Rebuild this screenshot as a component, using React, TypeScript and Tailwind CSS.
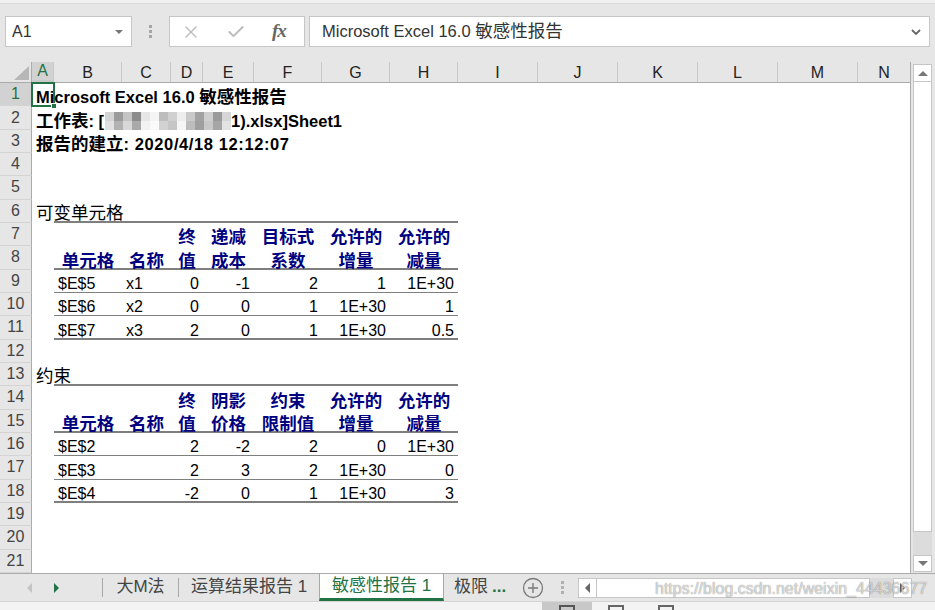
import React from 'react';
import { X, Check } from 'lucide-react';

type Cell = { t?: React.ReactNode; a?: 'l' | 'r' | 'c'; h?: boolean };

const COLS = [
  { k: 'A', w: 'w-[22px]' },
  { k: 'B', w: 'w-[68px]' },
  { k: 'C', w: 'w-[49px]' },
  { k: 'D', w: 'w-[32px]' },
  { k: 'E', w: 'w-[51px]' },
  { k: 'F', w: 'w-[68px]' },
  { k: 'G', w: 'w-[68px]' },
  { k: 'H', w: 'w-[68px]' },
  { k: 'I', w: 'w-[80px]' },
  { k: 'J', w: 'w-[80px]' },
  { k: 'K', w: 'w-[80px]' },
  { k: 'L', w: 'w-[80px]' },
  { k: 'M', w: 'w-[80px]' },
  { k: 'N', w: 'w-[52px]' },
];

// pixelated (blurred-out) part of the file name
const MOSAIC = [
  '#d4d4d4', '#9b9b9b', '#c4c4c4', '#8c8c8c', '#e6e6e6', '#f4f4f4', '#bdbdbd', '#d0d0d0',
  '#ededed', '#c9c9c9', '#a2a2a2', '#cfcfcf', '#9a9a9a', '#d6d6d6',
  '#e1e1e1', '#b2b2b2', '#d8d8d8', '#a9a9a9', '#f2f2f2', '#fafafa', '#d2d2d2', '#c6c6c6',
  '#f6f6f6', '#bcbcbc', '#9f9f9f', '#c8c8c8', '#a6a6a6', '#e3e3e3',
];

function Mosaic() {
  return (
    <span className="grid grid-cols-[repeat(14,9px)] grid-rows-[9px_9px] self-end mb-[1px] ml-[1px]">
      {MOSAIC.map((c, i) => (
        <span key={i} className="block" style={{ backgroundColor: c }} />
      ))}
    </span>
  );
}

// title lines: a flex run so mixed fonts don't stretch the line box
function Title({ children }: { children: React.ReactNode }) {
  return <span className="flex items-baseline h-[20px] leading-[20px] font-bold text-[16.5px]">{children}</span>;
}

const cjk = (s: string) => <span className="text-[17.5px]">{s}</span>;

const hdr = (s: string): Cell => ({ t: s, a: 'c', h: true });

const ROWS: Record<number, Cell[]> = {
  1: [{ t: <Title>Microsoft Excel 16.0&nbsp;{cjk('敏感性报告')}</Title> }],
  2: [{ t: <Title>{cjk('工作表')}<span>:&nbsp;[</span><Mosaic /><span>1).xlsx]Sheet1</span></Title> }],
  3: [{ t: <Title>{cjk('报告的建立')}<span className="tracking-[0.6px]">:&nbsp;2020/4/18 12:12:07</span></Title> }],
  6: [{ t: cjk('可变单元格') }],
  7: [{}, {}, {}, hdr('终'), hdr('递减'), hdr('目标式'), hdr('允许的'), hdr('允许的')],
  8: [{}, hdr('单元格'), hdr('名称'), hdr('值'), hdr('成本'), hdr('系数'), hdr('增量'), hdr('减量')],
  9: [{}, { t: '$E$5' }, { t: 'x1' }, { t: '0', a: 'r' }, { t: '-1', a: 'r' }, { t: '2', a: 'r' }, { t: '1', a: 'r' }, { t: '1E+30', a: 'r' }],
  10: [{}, { t: '$E$6' }, { t: 'x2' }, { t: '0', a: 'r' }, { t: '0', a: 'r' }, { t: '1', a: 'r' }, { t: '1E+30', a: 'r' }, { t: '1', a: 'r' }],
  11: [{}, { t: '$E$7' }, { t: 'x3' }, { t: '2', a: 'r' }, { t: '0', a: 'r' }, { t: '1', a: 'r' }, { t: '1E+30', a: 'r' }, { t: '0.5', a: 'r' }],
  13: [{ t: cjk('约束') }],
  14: [{}, {}, {}, hdr('终'), hdr('阴影'), hdr('约束'), hdr('允许的'), hdr('允许的')],
  15: [{}, hdr('单元格'), hdr('名称'), hdr('值'), hdr('价格'), hdr('限制值'), hdr('增量'), hdr('减量')],
  16: [{}, { t: '$E$2' }, {}, { t: '2', a: 'r' }, { t: '-2', a: 'r' }, { t: '2', a: 'r' }, { t: '0', a: 'r' }, { t: '1E+30', a: 'r' }],
  17: [{}, { t: '$E$3' }, {}, { t: '2', a: 'r' }, { t: '3', a: 'r' }, { t: '2', a: 'r' }, { t: '1E+30', a: 'r' }, { t: '0', a: 'r' }],
  18: [{}, { t: '$E$4' }, {}, { t: '-2', a: 'r' }, { t: '0', a: 'r' }, { t: '1', a: 'r' }, { t: '1E+30', a: 'r' }, { t: '3', a: 'r' }],
};

const LINES: Record<number, 'thick' | 'thin'> = {
  6: 'thick', 8: 'thick', 9: 'thin', 10: 'thin', 11: 'thick',
  13: 'thick', 15: 'thick', 16: 'thin', 17: 'thin', 18: 'thick',
};

function SheetRow({ n }: { n: number }) {
  const cells = ROWS[n] || [];
  const line = LINES[n];
  return (
    <div className="flex h-[23.333px]">
      <div
        className={`w-[32px] shrink-0 flex items-center justify-center border-r border-b border-r-[#ababab] border-b-[#d4d4d4] text-[16px] ${
          n === 1 ? 'bg-[#d2d2d2] text-[#217346]' : 'bg-[#e6e6e6] text-[#444]'
        }`}
      >
        {n}
      </div>
      {COLS.map((c, i) => {
        const cell = cells[i] || {};
        const inTable = i >= 1 && i <= 7;
        const shadow =
          inTable && line === 'thick'
            ? 'shadow-[inset_0_-2px_0_#7f7f7f]'
            : inTable && line === 'thin'
            ? 'shadow-[inset_0_-1px_0_#7f7f7f]'
            : '';
        const align =
          cell.a === 'r' ? 'justify-end pr-[4px]' : cell.a === 'c' ? 'justify-center' : 'justify-start pl-[4px]';
        return (
          <div key={c.k} className={`relative shrink-0 flex items-end ${c.w} ${align} ${shadow}`}>
            {cell.t !== undefined && (
              <span
                className={`whitespace-nowrap leading-[20px] -mb-[1px] ${
                  cell.h ? 'font-bold text-[17.5px] text-[#000080]' : 'text-[16px] text-black'
                }`}
              >
                {cell.t}
              </span>
            )}
            {n === 1 && i === 0 && (
              <>
                <div className="absolute -left-[1px] -top-[1px] w-[24px] h-[25px] border-2 border-[#217346]" />
                <div className="absolute -right-[3px] -bottom-[3px] w-[6px] h-[6px] bg-[#217346] border border-white" />
              </>
            )}
          </div>
        );
      })}
    </div>
  );
}

function Toolbar() {
  return (
    <div className="h-[62px] shrink-0 flex flex-col">
      <div className="h-[4px] bg-[#f1f1f1] border-b border-[#dadada]" />
      <div className="flex items-center mt-[12px] h-[31px]">
        <div className="ml-[5px] w-[127px] h-[31px] bg-white border border-[#c6c6c6] flex items-center pl-[6px] pr-[8px] justify-between">
          <span className="text-[16px] text-[#333]">A1</span>
          <span className="w-0 h-0 border-l-[4px] border-r-[4px] border-t-[4px] border-l-transparent border-r-transparent border-t-[#777]" />
        </div>
        <div className="ml-[17px] flex flex-col gap-[2px]">
          <span className="w-[3px] h-[3px] bg-[#a6a6a6]" />
          <span className="w-[3px] h-[3px] bg-[#a6a6a6]" />
          <span className="w-[3px] h-[3px] bg-[#a6a6a6]" />
        </div>
        <div className="ml-[17px] w-[136px] h-[31px] bg-white border border-[#c6c6c6] flex items-center pl-[11px]">
          <X size={20} strokeWidth={1.6} className="text-[#bcbcbc]" />
          <Check size={20} strokeWidth={2.4} className="text-[#bcbcbc] ml-[25px]" />
          <span className="ml-[26px] font-['Liberation_Serif',serif] italic font-bold text-[19px] text-[#666] tracking-[-1px]">
            fx
          </span>
        </div>
        <div className="ml-[4px] w-[621px] h-[31px] bg-white border border-[#c6c6c6] flex items-center pl-[12px] pr-[8px] justify-between">
          <span className="text-[16.5px] text-[#333] whitespace-nowrap">
            Microsoft Excel 16.0 <span className="text-[17.5px]">敏感性报告</span>
          </span>
          <svg width="10" height="8" viewBox="0 0 10 8">
            <path d="M1 2 L5 6 L9 2" stroke="#666" strokeWidth="1.8" fill="none" />
          </svg>
        </div>
      </div>
    </div>
  );
}

function ColumnHeader() {
  return (
    <div className="flex h-[21px] shrink-0 border-b border-[#ababab]">
      <div className="w-[32px] shrink-0 border-r border-[#ababab] relative bg-[#e6e6e6]">
        <div className="absolute left-[14px] top-[4px] w-0 h-0 border-l-[15px] border-b-[14px] border-l-transparent border-b-[#b7b7b7]" />
      </div>
      {COLS.map((c, i) => (
        <div
          key={c.k}
          className={`${c.w} shrink-0 flex items-end justify-center text-[16px] leading-[19px] ${
            i === 0 ? 'bg-[#d2d2d2] text-[#217346] border-b-2 border-[#217346]' : 'text-[#222]'
          } ${i < COLS.length - 1 ? 'border-r border-[#c9c9c9]' : ''}`}
        >
          {c.k}
        </div>
      ))}
    </div>
  );
}

function VScroll() {
  return (
    <div className="w-[24px] shrink-0 flex flex-col pl-[2px] pr-[3px] pb-[1px]">
      <div className="mt-[2px] h-[18px] bg-white border border-[#c6c6c6] flex items-center justify-center">
        <span className="w-0 h-0 border-l-[5px] border-r-[5px] border-b-[5px] border-l-transparent border-r-transparent border-b-[#777]" />
      </div>
      <div className="h-[450px] bg-white border-x border-b border-[#c6c6c6]" />
      <div className="flex-1 bg-[#dcdcdc]" />
      <div className="h-[17px] bg-white border border-[#c6c6c6] flex items-center justify-center">
        <span className="w-0 h-0 border-l-[5px] border-r-[5px] border-t-[5px] border-l-transparent border-r-transparent border-t-[#777]" />
      </div>
    </div>
  );
}

function TabBar() {
  return (
    <div className="h-[28px] shrink-0 flex items-stretch border-t border-[#ababab] relative">
      <div className="w-[102px] shrink-0 flex items-center pl-[27px] gap-[22px]">
        <span className="w-0 h-0 border-t-[5px] border-b-[5px] border-r-[5px] border-t-transparent border-b-transparent border-r-[#c4c4c4]" />
        <span className="w-0 h-0 border-t-[5px] border-b-[5px] border-l-[5px] border-t-transparent border-b-transparent border-l-[#217346]" />
      </div>
      <div className="w-[1px] my-[4px] bg-[#a8a8a8]" />
      <div className="w-[75px] flex items-center justify-center text-[#444] text-[17px] pb-[2px]">大M法</div>
      <div className="w-[1px] my-[4px] bg-[#a8a8a8]" />
      <div className="w-[140px] flex items-center justify-center text-[#444] text-[17px] pb-[2px]">运算结果报告 1</div>
      <div className="w-[125px] bg-white border-l border-r border-[#a8a8a8] border-b-[3px] border-b-[#217346] flex items-center justify-center text-[#217346] text-[17px]">
        敏感性报告 1
      </div>
      <div className="w-[70px] flex items-center pl-[10px] text-[#444] text-[17px] pb-[2px] whitespace-nowrap">
        极限 <span className="ml-[4px] text-[#217346] font-bold">...</span>
      </div>
      <div className="flex items-center ml-[8px]">
        <svg width="22" height="22" viewBox="0 0 22 22">
          <circle cx="11" cy="11" r="9.5" stroke="#7a7a7a" strokeWidth="1.3" fill="none" />
          <path d="M11 6 V16 M6 11 H16" stroke="#7a7a7a" strokeWidth="1.4" />
        </svg>
      </div>
      <div className="ml-[17px] flex flex-col justify-center gap-[2px]">
        <span className="w-[3px] h-[3px] bg-[#b0b0b0]" />
        <span className="w-[3px] h-[3px] bg-[#b0b0b0]" />
        <span className="w-[3px] h-[3px] bg-[#b0b0b0]" />
      </div>
      <div className="ml-[14px] w-[334px] flex items-center mt-[1px] h-[20px] self-center">
        <div className="w-[19px] h-[20px] bg-white border border-[#c6c6c6] flex items-center justify-center">
          <span className="w-0 h-0 border-t-[5px] border-b-[5px] border-r-[5px] border-t-transparent border-b-transparent border-r-[#666]" />
        </div>
        <div className="w-[273px] h-[20px] bg-white border-y border-r border-[#c6c6c6]" />
        <div className="flex-1 h-[20px] bg-[#dcdcdc]" />
        <div className="w-[19px] h-[20px] bg-white border border-[#c6c6c6] flex items-center justify-center">
          <span className="w-0 h-0 border-t-[5px] border-b-[5px] border-l-[5px] border-t-transparent border-b-transparent border-l-[#666]" />
        </div>
      </div>
      {/* watermark over the scrollbar */}
      <div className="absolute left-[655px] top-[3px] text-[16px] text-white/70 [text-shadow:0_0_1px_rgba(0,0,0,0.6)] whitespace-nowrap pointer-events-none">
        https://blog.csdn.net/weixin_44436677
      </div>
    </div>
  );
}

function StatusBar() {
  return (
    <div className="flex-1 bg-[#f3f3f3] border-t border-[#d4d4d4] flex items-start">
      <div className="ml-[542px] w-[50px] h-full bg-[#c8c8c8] flex justify-center pt-[3px]">
        <span className="w-[16px] h-[8px] border-2 border-b-0 border-[#555]" />
      </div>
      <div className="ml-[16px] pt-[3px]">
        <span className="block w-[16px] h-[8px] border-2 border-b-0 border-[#666]" />
      </div>
      <div className="ml-[34px] pt-[3px]">
        <span className="block w-[16px] h-[8px] border-2 border-b-0 border-[#666]" />
      </div>
    </div>
  );
}

export default function App() {
  const rows = Array.from({ length: 21 }, (_, i) => i + 1);
  return (
    <div className="w-[935px] h-[610px] overflow-hidden bg-[#e6e6e6] flex flex-col font-['Liberation_Sans','Noto_Sans_CJK_SC',sans-serif]">
      <Toolbar />
      <div className="flex h-[511px] shrink-0">
        <div className="w-[911px] shrink-0 flex flex-col border-r border-[#ababab]">
          <ColumnHeader />
          <div className="flex-1 bg-white flex flex-col">
            {rows.map((n) => (
              <SheetRow key={n} n={n} />
            ))}
          </div>
        </div>
        <VScroll />
      </div>
      <TabBar />
      <StatusBar />
    </div>
  );
}
